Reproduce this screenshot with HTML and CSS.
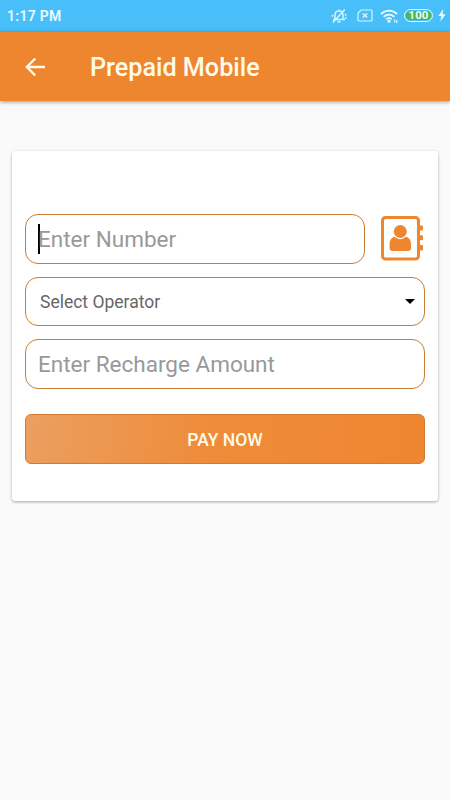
FILE: index.html
```
<!DOCTYPE html>
<html lang="en">

<head>
    <title>Prepaid Mobile</title>
    <meta charset="utf-8">
    <meta name="viewport" content="width=device-width, initial-scale=1">
    <link rel="stylesheet" href="styles.css">
</head>

<body>
    <div class="status-bar">
        <span class="clock">1:17 PM</span>
        <div class="status-icons">
            <!-- muted bell -->
            <svg class="icon-bell" width="16" height="16" viewBox="0 0 16 16">
                <path d="M2 11.5h12M4 11V7c0-2.4 1.600-4 4-4s4 1.600 4 4v4M8 3V1.500M6.500 13.700h3M13.800 1.500L1.800 14.500M.8 8.500l1.400-1.500M14 6l1.200 1.500M14 9.500l1.500.8" />
            </svg>
            <!-- no sim -->
            <svg class="icon-sim" width="16" height="13" viewBox="0 0 16 13">
                <path d="M4.2 1H14c.7 0 1 .4 1 1v9c0 .6-.3 1-1 1H2c-.6 0-1-.4-1-1V4z" />
                <path class="cross" d="M5.800 4.500l4.400 4M10.200 4.500l-4.400 4" />
            </svg>
            <svg class="icon-wifi" width="19" height="14" viewBox="0 0 19 14">
                <path class="waves" d="M1 5C5.7.5 12.3.5 17 5M3.7 7.800c3.1-2.900 7.500-2.900 10.600 0M6.300 10.300c1.600-1.400 3.800-1.400 5.400 0" />
                <circle cx="9" cy="12.2" r="1.5" />
                <path class="traffic" d="M14.800 10.500v3M16.800 11v3" />
            </svg>
            <div class="battery"><span>100</span></div>
            <svg class="icon-bolt" width="8" height="13" viewBox="0 0 8 13">
                <path d="M5.300 0L.3 7h3L2.300 12.500 7.700 5.300H4.600z" />
            </svg>
        </div>
    </div>

    <div class="toolbar">
        <svg class="back-arrow" width="20" height="20" viewBox="0 0 20 20">
            <path d="M20 10H1.800M10.300 1.500L1.800 10l8.500 8.500" />
        </svg>
        <h1>Prepaid Mobile</h1>
    </div>

    <div class="card">
        <div class="number-row">
            <div class="field number-field">
                <span class="caret"></span>
                <span class="hint">Enter Number</span>
            </div>
            <svg class="contacts" width="43" height="45" viewBox="0 0 43 45">
                <rect class="book" x="1.5" y="1.5" width="36" height="41.5" rx="3" />
                <path d="M38.500 9.500h2.500q1 0 1 1v3q0 1-1 1h-2.500zM38.500 19.300h2.500q1 0 1 1v3q0 1-1 1h-2.500zM38.500 29h2.500q1 0 1 1v3.500q0 1-1 1h-2.500z" />
                <circle cx="19.3" cy="15.500" r="6.500" />
                <path d="M13.800 20.800c3 3.200 8 3.200 11 0 3.500.7 5.200 3.600 5.200 7.200v4q0 3-3 3H11.600q-3 0-3-3v-4c0-3.600 1.700-6.500 5.200-7.200z" />
            </svg>
        </div>
        <div class="field select-field">
            <span>Select Operator</span>
            <svg width="10" height="5" viewBox="0 0 10 5">
                <path d="M0 0h10L5 5z" />
            </svg>
        </div>
        <div class="field">
            <span class="hint">Enter Recharge Amount</span>
        </div>
        <button class="pay-button">PAY NOW</button>
    </div>
</body>

</html>
```

FILE: styles.css
```
* {
    box-sizing: border-box;
}

body {
    margin: 0;
    min-height: 100vh;
    background-color: #fafafa;
    font-family: Roboto, sans-serif;
}

svg {
    display: block;
    flex-shrink: 0;
}

/* Status bar */
.status-bar {
    display: flex;
    align-items: center;
    justify-content: space-between;
    height: 32px;
    padding: 0 4px 0 7px;
    background-color: #48bff9;
    border-bottom: 1px solid #a6a08c;
    color: #e9fbff;
}

.clock {
    font-size: 14px;
    font-weight: 600;
    letter-spacing: 0.3px;
}

.status-icons {
    display: flex;
    align-items: center;
}

.icon-bell,
.icon-sim,
.waves,
.traffic {
    fill: none;
    stroke: #d9f5ff;
    stroke-width: 1.2;
}

.icon-bell {
    margin-right: 10px;
    stroke-width: 1.5;
}

.icon-sim {
    margin-right: 7px;
}

.cross {
    stroke-width: 1.6;
}

.icon-wifi {
    margin-right: 5px;
    fill: #e9fbff;
}

.waves {
    stroke: #e9fbff;
    stroke-width: 1.8;
}

.battery {
    display: flex;
    align-items: center;
    justify-content: center;
    width: 29px;
    height: 13px;
    margin-right: 5px;
    border: 1px solid #e9fbff;
    border-radius: 7px;
    background-color: #4cb748;
    box-shadow: inset 0 0 0 1px #48bff9;
    font-size: 11.5px;
    font-weight: 700;
    line-height: 11px;
}

.icon-bolt {
    fill: #e9fbff;
}

/* Toolbar */
.toolbar {
    display: flex;
    align-items: center;
    height: 69px;
    padding-left: 25px;
    background-color: #ee8630;
    box-shadow: 0 1px 4px rgba(0, 0, 0, 0.4);
}

.back-arrow {
    fill: none;
    stroke: #fffbe8;
    stroke-width: 2.4;
}

.toolbar h1 {
    margin: 2px 0 0 45px;
    color: #fffbe8;
    font-size: 25.2px;
    font-weight: 500;
}

/* Form card */
.card {
    display: flex;
    flex-direction: column;
    gap: 13px;
    height: 350px;
    margin: 50px 12px 0;
    padding: 63px 13px 0;
    background-color: #fff;
    border-radius: 3px;
    box-shadow: 0 1px 3px rgba(0, 0, 0, 0.35);
}

.number-row {
    display: flex;
    align-items: center;
    gap: 16px;
}

.field {
    display: flex;
    align-items: center;
    height: 49.5px;
    padding: 1px 12px 0;
    border: 1px solid #c67f35;
    border-radius: 13px;
}

.number-field {
    width: 340px;
}

.hint {
    color: #999;
    font-size: 22.5px;
}

.caret {
    width: 2px;
    height: 30px;
    margin-right: -2px;
    background-color: #000;
}

.select-field {
    justify-content: space-between;
    padding: 1px 9px 0 14px;
    color: #666;
    font-size: 17.5px;
}

.contacts {
    fill: #ee8630;
}

.book {
    fill: none;
    stroke: #ee8630;
    stroke-width: 3;
}

.pay-button {
    height: 50px;
    margin-top: 12px;
    padding: 2px 0 0;
    border: 1px solid #cf7b34;
    border-radius: 6px;
    background: linear-gradient(100deg, #eb9f60, #ee8c3b 45%, #ee8630);
    color: #fffbe8;
    font-family: inherit;
    font-size: 17.5px;
    font-weight: 500;
}
```
